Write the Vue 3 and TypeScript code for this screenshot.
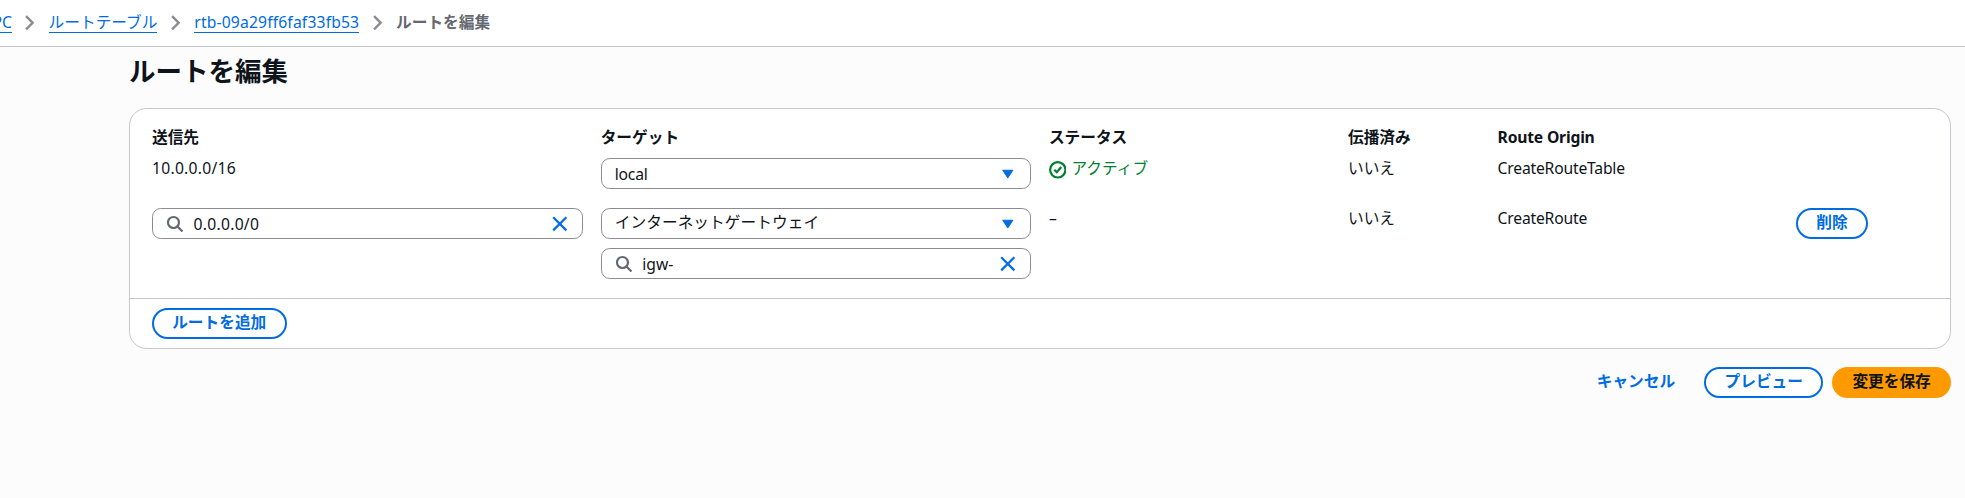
<script setup lang="ts">
interface Crumb {
  label: string
  kind: string
}

const crumbs: Crumb[] = [
  { label: 'VPC', kind: 'vpc' },
  { label: 'ルートテーブル', kind: 'tables' },
  { label: 'rtb-09a29ff6faf33fb53', kind: 'ip' },
]

const headers: string[] = ['送信先', 'ターゲット', 'ステータス', '伝播済み', 'Route Origin', '']
</script>

<template>
  <div class="page">
    <nav class="breadcrumbs">
      <template v-for="c in crumbs" :key="c.label">
        <a class="crumb" :class="c.kind">{{ c.label }}</a>
        <svg class="chevron" viewBox="0 0 16 16"><path d="m4.6 2 6 6-6 6" /></svg>
      </template>
      <span class="current">ルートを編集</span>
    </nav>

    <main class="content">
      <h1>ルートを編集</h1>

      <section class="card">
        <div class="routes">
          <div class="row head">
            <div v-for="(h, i) in headers" :key="i" class="cell" :class="{ latin: h === 'Route Origin' }">{{ h }}</div>
          </div>

          <div class="row first">
            <div class="cell value ip">10.0.0.0/16</div>
            <div class="cell">
              <div class="field">
                <span class="text latin">local</span>
                <svg class="icon caret" viewBox="0 0 16 16"><path d="M3.5 4.8h9L8 11.6z" /></svg>
              </div>
            </div>
            <div class="cell value status">
              <svg class="icon check" viewBox="0 0 16 16">
                <circle cx="8" cy="8" r="7" />
                <path d="m4.8 8 2.3 2.2 4-4.7" />
              </svg>
              <span>アクティブ</span>
            </div>
            <div class="cell value">いいえ</div>
            <div class="cell value latin">CreateRouteTable</div>
            <div class="cell"></div>
          </div>

          <div class="row second">
            <div class="cell">
              <div class="field search">
                <svg class="icon lens" viewBox="0 0 16 16"><circle cx="6.8" cy="6.8" r="5" /><path d="m15 15-4.6-4.6" /></svg>
                <span class="text ip">0.0.0.0/0</span>
                <svg class="icon close" viewBox="0 0 16 16"><path d="m2 2 12 12M14 2 2 14" /></svg>
              </div>
            </div>
            <div class="cell stack">
              <div class="field">
                <span class="text kana">インターネットゲートウェイ</span>
                <svg class="icon caret" viewBox="0 0 16 16"><path d="M3.5 4.8h9L8 11.6z" /></svg>
              </div>
              <div class="field search">
                <svg class="icon lens" viewBox="0 0 16 16"><circle cx="6.8" cy="6.8" r="5" /><path d="m15 15-4.6-4.6" /></svg>
                <span class="text">igw-</span>
                <svg class="icon close" viewBox="0 0 16 16"><path d="m2 2 12 12M14 2 2 14" /></svg>
              </div>
            </div>
            <div class="cell value">–</div>
            <div class="cell value">いいえ</div>
            <div class="cell value latin">CreateRoute</div>
            <div class="cell"><button class="btn" type="button">削除</button></div>
          </div>
        </div>

        <div class="card-footer">
          <button class="btn" type="button">ルートを追加</button>
        </div>
      </section>

      <div class="actions">
        <button class="btn link" type="button">キャンセル</button>
        <button class="btn" type="button">プレビュー</button>
        <button class="btn primary" type="button">変更を保存</button>
      </div>
    </main>
  </div>
</template>

<style>
body {
  background: #fcfcfd;
}
</style>

<style scoped>
.page {
  height: 498px;
  overflow: hidden;
  background: #fcfcfd;
  color: #0f141a;
  font-family: 'Noto Sans', 'Noto Sans CJK JP', sans-serif;
  font-size: 15.7px;
  line-height: 22px;
}
.breadcrumbs {
  display: flex;
  align-items: center;
  box-sizing: border-box;
  height: 47px;
  padding-bottom: 1px;
  border-bottom: 1px solid #c6c6cd;
  background: #fff;
  white-space: nowrap;
}
.crumb {
  flex: none;
  height: 20px;
  line-height: 20px;
  border-bottom: 1px solid #006ce0;
  color: #006ce0;
}
.crumb.vpc {
  margin-left: -17px;
}
.crumb.ip {
  letter-spacing: 0.15px;
}
.chevron {
  flex: none;
  width: 17.6px;
  height: 17.6px;
  margin: 1px 9.6px 0;
  fill: none;
  stroke: #8c8c94;
  stroke-width: 2.2;
}
.current {
  padding-bottom: 1px;
  color: #656871;
  font-weight: 700;
}
.content {
  padding: 0 14px 0 129px;
}
h1 {
  margin: 0;
  padding: 8px 0 20px;
  font-size: 26.5px;
  line-height: 33px;
  font-weight: 700;
}
.card {
  box-sizing: border-box;
  height: 241px;
  border: 1px solid #c6c6cd;
  border-radius: 17.6px;
  background: #fff;
}
.routes {
  box-sizing: border-box;
  height: 189px;
  padding: 17px 22px 0;
}
.row {
  display: grid;
  grid-template-columns: 430.6px 430.1px 281px 131.5px 280.4px 131.7px;
  column-gap: 18.1px;
}
.head {
  height: 32px;
  font-weight: 700;
}
.first {
  height: 50px;
}
.value {
  line-height: 20px;
}
.ip {
  letter-spacing: 0.25px;
}
.latin {
  letter-spacing: -0.2px;
}
.status {
  display: flex;
  gap: 5px;
  color: #00802f;
}
.stack {
  display: flex;
  flex-direction: column;
  gap: 9px;
}
.field {
  display: flex;
  align-items: center;
  box-sizing: border-box;
  height: 31px;
  padding: 0 13px;
  border: 1px solid #8c8c94;
  border-radius: 8.8px;
}
.text {
  flex: 1;
}
.kana {
  padding-bottom: 3px;
  letter-spacing: 0.05px;
}
.icon {
  flex: none;
  width: 17.6px;
  height: 17.6px;
  fill: none;
  stroke-width: 2;
}
.caret {
  fill: #006ce0;
  stroke: #006ce0;
  stroke-width: 1;
  stroke-linejoin: round;
}
.check {
  margin-top: 3px;
  stroke: #00802f;
}
.lens {
  margin-right: 10px;
  stroke: #656871;
}
.close {
  stroke: #006ce0;
}
.btn {
  box-sizing: border-box;
  height: 31px;
  padding: 0 18.2px 3px;
  border: 2px solid #006ce0;
  border-radius: 22px;
  background: #fff;
  color: #006ce0;
  font: inherit;
  font-weight: 700;
  line-height: 24px;
  white-space: nowrap;
}
.card-footer {
  box-sizing: border-box;
  height: 50px;
  padding: 9px 22px;
  border-top: 1px solid #c6c6cd;
}
.actions {
  display: flex;
  justify-content: flex-end;
  gap: 9px;
  padding-top: 18px;
}
.link {
  border-color: transparent;
  background: transparent;
}
.primary {
  border-color: #ff9900;
  background: #ff9900;
  color: #0f141a;
}
</style>
